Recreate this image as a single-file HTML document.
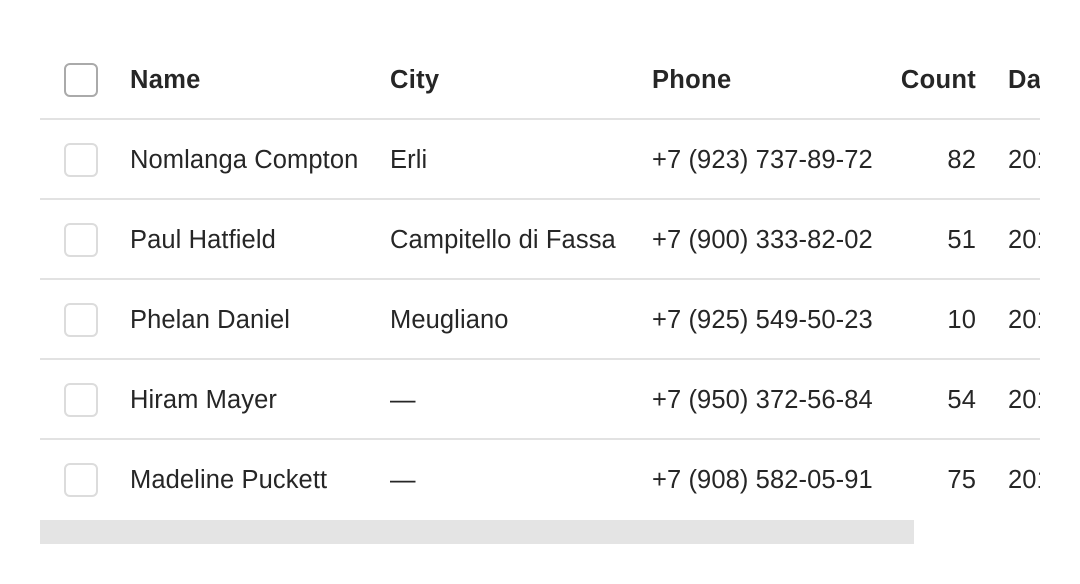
<!DOCTYPE html>
<html><head><style>
body{margin:0;width:1080px;height:584px;background:#fff;font-family:"Liberation Sans",Arial,Helvetica,sans-serif;color:#262626;position:relative;overflow:hidden}
.wrap{position:absolute;left:40px;top:40px;width:1000px;height:480px;overflow:hidden}
.row{position:absolute;left:0;width:1100px;height:80px;border-bottom:2px solid #e2e2e2;box-sizing:border-box;font-size:25.5px;letter-spacing:0.1px}
.row span{position:absolute;top:1px;line-height:78px;white-space:nowrap}
.cb{position:absolute;left:24px;top:23px;width:34px;height:34px;box-sizing:border-box;border:2px solid #dcdcdc;border-radius:6px}
.h{font-weight:bold;letter-spacing:0.3px}
.h .cb{border-color:#aaa}
.c1{left:90px}.c2{left:350px}.c3{left:612px}.c4{right:164px;text-align:right}.c5{left:968px}
.bar{position:absolute;left:40px;top:520px;width:874px;height:24px;background:#e4e4e4}
</style></head><body>
<div class="wrap">
<div class="row h" style="top:0"><div class="cb"></div><span class="c1">Name</span><span class="c2">City</span><span class="c3">Phone</span><span class="c4">Count</span><span class="c5">Date</span></div>
<div class="row" style="top:80px"><div class="cb"></div><span class="c1">Nomlanga Compton</span><span class="c2">Erli</span><span class="c3">+7 (923) 737-89-72</span><span class="c4">82</span><span class="c5">2019</span></div>
<div class="row" style="top:160px"><div class="cb"></div><span class="c1">Paul Hatfield</span><span class="c2">Campitello di Fassa</span><span class="c3">+7 (900) 333-82-02</span><span class="c4">51</span><span class="c5">2019</span></div>
<div class="row" style="top:240px"><div class="cb"></div><span class="c1">Phelan Daniel</span><span class="c2">Meugliano</span><span class="c3">+7 (925) 549-50-23</span><span class="c4">10</span><span class="c5">2019</span></div>
<div class="row" style="top:320px"><div class="cb"></div><span class="c1">Hiram Mayer</span><span class="c2">—</span><span class="c3">+7 (950) 372-56-84</span><span class="c4">54</span><span class="c5">2019</span></div>
<div class="row" style="top:400px;border-bottom:none"><div class="cb"></div><span class="c1">Madeline Puckett</span><span class="c2">—</span><span class="c3">+7 (908) 582-05-91</span><span class="c4">75</span><span class="c5">2019</span></div>
</div>
<div class="bar"></div>
</body></html>
